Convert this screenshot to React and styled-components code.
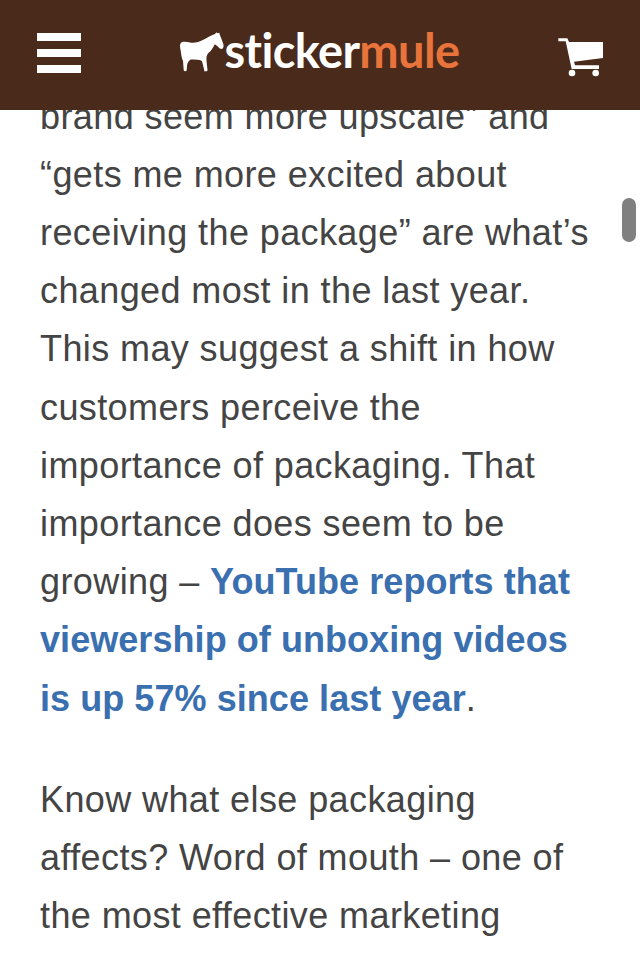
import React from "react";
import styled, { createGlobalStyle } from "styled-components";

const Global = createGlobalStyle`
  html, body {
    margin: 0;
    padding: 0;
    height: 959px;
    overflow: hidden;
    background: #fff;
  }
`;

const Header = styled.header`
  position: fixed;
  top: 0;
  left: 0;
  right: 0;
  height: 110px;
  background: #4a2a1b;
  display: flex;
  align-items: center;
  justify-content: space-between;
  padding: 0 37px;
  box-sizing: border-box;
`;

const Burger = styled.div`
  width: 44px;
  display: flex;
  flex-direction: column;
  gap: 8px;
  margin-top: -4px;
`;

const BurgerBar = styled.span`
  display: block;
  height: 8px;
  background: #fff;
`;

const Logo = styled.div`
  display: flex;
  align-items: center;
  margin-top: -4px;
`;

const Horse = styled.svg`
  width: 45px;
  height: 42px;
  display: block;
  margin-right: 1px;
`;

const Wordmark = styled.span`
  font-family: "Lato", "Open Sans", sans-serif;
  font-weight: 700;
  font-size: 47px;
  line-height: 1;
  letter-spacing: -0.65px;
  margin-top: -5px;
  color: ${props => props.color || "#fff"};
`;

const Cart = styled.svg`
  width: 48px;
  height: 42px;
  display: block;
  margin-top: 6px;
  margin-right: -2px;
`;

const Article = styled.main`
  padding: 87.5px 40px 0;
  font-family: "Liberation Sans", Arial, sans-serif;
  font-size: 36px;
  line-height: 58.2px;
  letter-spacing: 0.4px;
  color: #444;
`;

const Para = styled.p`
  margin: 0 0 43px;
  white-space: nowrap;
`;

const Link = styled.a`
  color: #3a6fb0;
  font-weight: 700;
  letter-spacing: 0.06px;
  text-decoration: none;
`;

const ScrollThumb = styled.div`
  position: fixed;
  left: 622px;
  top: 198px;
  width: 14px;
  height: 44px;
  border-radius: 7px;
  background: #808080;
`;

export default function App() {
  return (
    <>
      <Global />
      <Article>
        <Para>
          brand seem more upscale” and
          <br />
          “gets me more excited about
          <br />
          receiving the package” are what’s
          <br />
          changed most in the last year.
          <br />
          This may suggest a shift in how
          <br />
          customers perceive the
          <br />
          importance of packaging. That
          <br />
          importance does seem to be
          <br />
          growing – <Link href="#">YouTube reports that</Link>
          <br />
          <Link href="#">viewership of unboxing videos</Link>
          <br />
          <Link href="#">is up 57% since last year</Link>.
        </Para>
        <Para>
          Know what else packaging
          <br />
          affects? Word of mouth – one of
          <br />
          the most effective marketing
        </Para>
      </Article>
      <Header>
        <Burger>
          <BurgerBar />
          <BurgerBar />
          <BurgerBar />
        </Burger>
        <Logo>
          <Horse viewBox="27 36 134 125">
            <path
              fill="#fff"
              d="M36 66 C44 63 52 66 60 67 C72 69 88 66 98 60 C110 54 122 46 134 42 L139 37 L141 40 L147 38 L148 43 C152 52 155 62 159 72 C160 78 160 84 156 86 C152 87 148 86 144 81 C141 77 137 74 133 73 C129 82 123 92 115 98 C109 104 108 112 109 122 L112 150 L110 153 L102 153 L102 149 C100 140 98 130 95 122 C88 118 76 119 62 118 C56 122 52 127 51 136 L50 150 C48 154 43 154 41 150 L39 122 C36 116 34 108 33 98 C32 92 30 84 30 78 C30 72 32 68 36 66 Z"
            />
          </Horse>
          <Wordmark>sticker</Wordmark>
          <Wordmark color="#e8743b">mule</Wordmark>
        </Logo>
        <Cart viewBox="710 112 144 126">
          <g fill="#fff">
            <path d="M714 116 L741 116 L746 127 L848 127 L848 175 L761 186 L764 197 L836 197 L836 208 L754 208 L736 125 L714 125 Z" />
            <circle cx="755" cy="220" r="10" />
            <circle cx="826" cy="220" r="10" />
          </g>
        </Cart>
      </Header>
      <ScrollThumb />
    </>
  );
}
